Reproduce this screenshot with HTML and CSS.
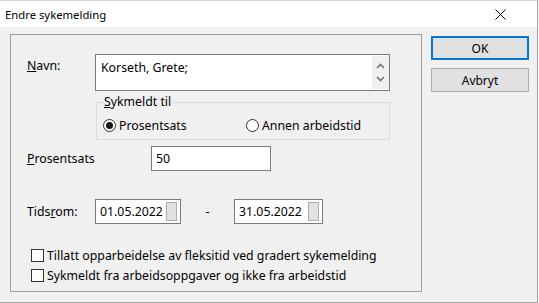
FILE: index.html
```html
<!DOCTYPE html>
<html lang="no">
<head>
    <meta charset="UTF-8">
    <title>Endre sykemelding</title>
    <link rel="stylesheet" href="styles.css">
</head>
<body>
<div class="window">
    <div class="titlebar">
        <span class="title">Endre sykemelding</span>
        <svg class="close" width="11" height="11" viewBox="0 0 11 11">
            <path d="M0.5 0.5 L10.5 10.5 M10.5 0.5 L0.5 10.5" stroke="#000" stroke-width="1" fill="none"/>
        </svg>
    </div>

    <div class="content">
        <div class="panel">
            <div class="row row-navn">
                <label class="label label-top"><u>N</u>avn:</label>
                <div class="memo">
                    <span class="memo-text">Korseth, Grete;</span>
                    <div class="scroll">
                        <svg width="9" height="6" viewBox="0 0 9 6"><path d="M1 5 L4.5 1.5 L8 5" stroke="#86705f" stroke-width="1.6" fill="none"/></svg>
                        <svg width="9" height="6" viewBox="0 0 9 6"><path d="M1 1 L4.5 4.5 L8 1" stroke="#86705f" stroke-width="1.6" fill="none"/></svg>
                    </div>
                </div>
            </div>

            <fieldset class="group">
                <legend><u>S</u>ykmeldt til</legend>
                <div class="radios">
                    <span class="radio-item first"><span class="radio checked"></span>Prosentsats</span>
                    <span class="radio-item"><span class="radio"></span>Annen arbeidstid</span>
                </div>
            </fieldset>

            <div class="row row-pct">
                <label class="label label-pct"><u>P</u>rosentsats</label>
                <div class="field pct">50</div>
            </div>

            <div class="row row-dates">
                <label class="label">Tids<u>r</u>om:</label>
                <div class="field date">01.05.2022<span class="drop"></span></div>
                <span class="dash">-</span>
                <div class="field date date2">31.05.2022<span class="drop"></span></div>
            </div>

            <div class="check-row first"><span class="check"></span>Tillatt opparbeidelse av fleksitid ved gradert sykemelding</div>
            <div class="check-row"><span class="check"></span>Sykmeldt fra arbeidsoppgaver og ikke fra arbeidstid</div>
        </div>

        <div class="buttons">
            <button class="btn default">OK</button>
            <button class="btn">Avbryt</button>
        </div>
    </div>
</div>
</body>
</html>
```

FILE: styles.css
```css
body {
    margin: 0;
    background: #f0f0f0;
    font-family: 'Noto Sans', 'Open Sans', sans-serif;
    font-size: 12.3px;
    color: #000;
}

.window {
    width: 537px;
    height: 301px;
    border-top: 1px solid #d4d4d4;
    border-right: 1px solid #a8a8a8;
    border-bottom: 1px solid #a8a8a8;
    background: #f0f0f0;
}

.titlebar {
    height: 26px;
    background: #fff;
    display: flex;
    align-items: center;
    justify-content: space-between;
    padding: 0 31px 0 5px;
}

.title {
    font-size: 11.3px;
}

.content {
    display: flex;
    align-items: flex-start;
    padding: 7px 0 0 10px;
}

.panel {
    width: 394px;
    height: 256px;
    border: 1px solid #a0a0a0;
    padding: 0 0 0 16px;
}

.row {
    display: flex;
    align-items: center;
}

.label {
    width: 68px;
    flex: none;
}

.row-navn {
    margin-top: 19px;
    align-items: flex-start;
}

.label-top {
    padding-top: 3px;
}

.memo {
    width: 293px;
    height: 35px;
    border: 1px solid #7a7a7a;
    background: #fff;
    display: flex;
    justify-content: space-between;
}

.memo-text {
    padding: 4px 0 0 5px;
}

.scroll {
    width: 17px;
    margin: 1px 0;
    background: #f0f0f0;
    display: flex;
    flex-direction: column;
    align-items: center;
    justify-content: space-around;
    padding: 4px 0;
}

.group {
    margin: 4px 0 0 69px;
    width: 286px;
    height: 43px;
    border: 1px solid #dcdcdc;
    padding: 0 0 0 6px;
}

.group legend {
    padding: 0 1px;
    line-height: 14px;
}

.radios {
    display: flex;
    align-items: center;
    margin-top: 8px;
}

.radio-item {
    display: flex;
    align-items: center;
}

.radio-item.first {
    width: 143px;
}

.radio {
    width: 11px;
    height: 11px;
    border: 1px solid #333;
    border-radius: 50%;
    background: #fff;
    margin-right: 3px;
    display: flex;
    align-items: center;
    justify-content: center;
}

.radio.checked::after {
    content: "";
    width: 7px;
    height: 7px;
    border-radius: 50%;
    background: #1a1a1a;
}

.row-pct {
    margin-top: 6px;
}

.label-pct {
    width: 124px;
}

.field {
    height: 23px;
    border: 1px solid #7a7a7a;
    background: #fff;
    display: flex;
    align-items: center;
    justify-content: space-between;
    padding: 0 3px 0 4px;
}

.pct {
    width: 111px;
}

.row-dates {
    margin-top: 28px;
}

.date {
    width: 77px;
}

.date2 {
    width: 80px;
}

.drop {
    width: 9px;
    height: 17px;
    background: #e1e1e1;
    border: 1px solid #adadad;
}

.dash {
    width: 53px;
    text-align: center;
}

.check-row {
    display: flex;
    align-items: center;
    height: 16px;
    margin-top: 4px;
    padding-left: 4px;
}

.check-row.first {
    margin-top: 23px;
}

.check {
    width: 11px;
    height: 11px;
    border: 1px solid #333;
    background: #fff;
    margin-right: 3px;
}

.buttons {
    display: flex;
    flex-direction: column;
    gap: 8px;
    margin: 2px 0 0 9px;
}

.btn {
    width: 98px;
    height: 24px;
    background: #e1e1e1;
    border: 1px solid #adadad;
    font-family: inherit;
    font-size: 12px;
    padding: 0;
    color: #000;
}

.btn.default {
    border: 2px solid #0078d7;
}
```
